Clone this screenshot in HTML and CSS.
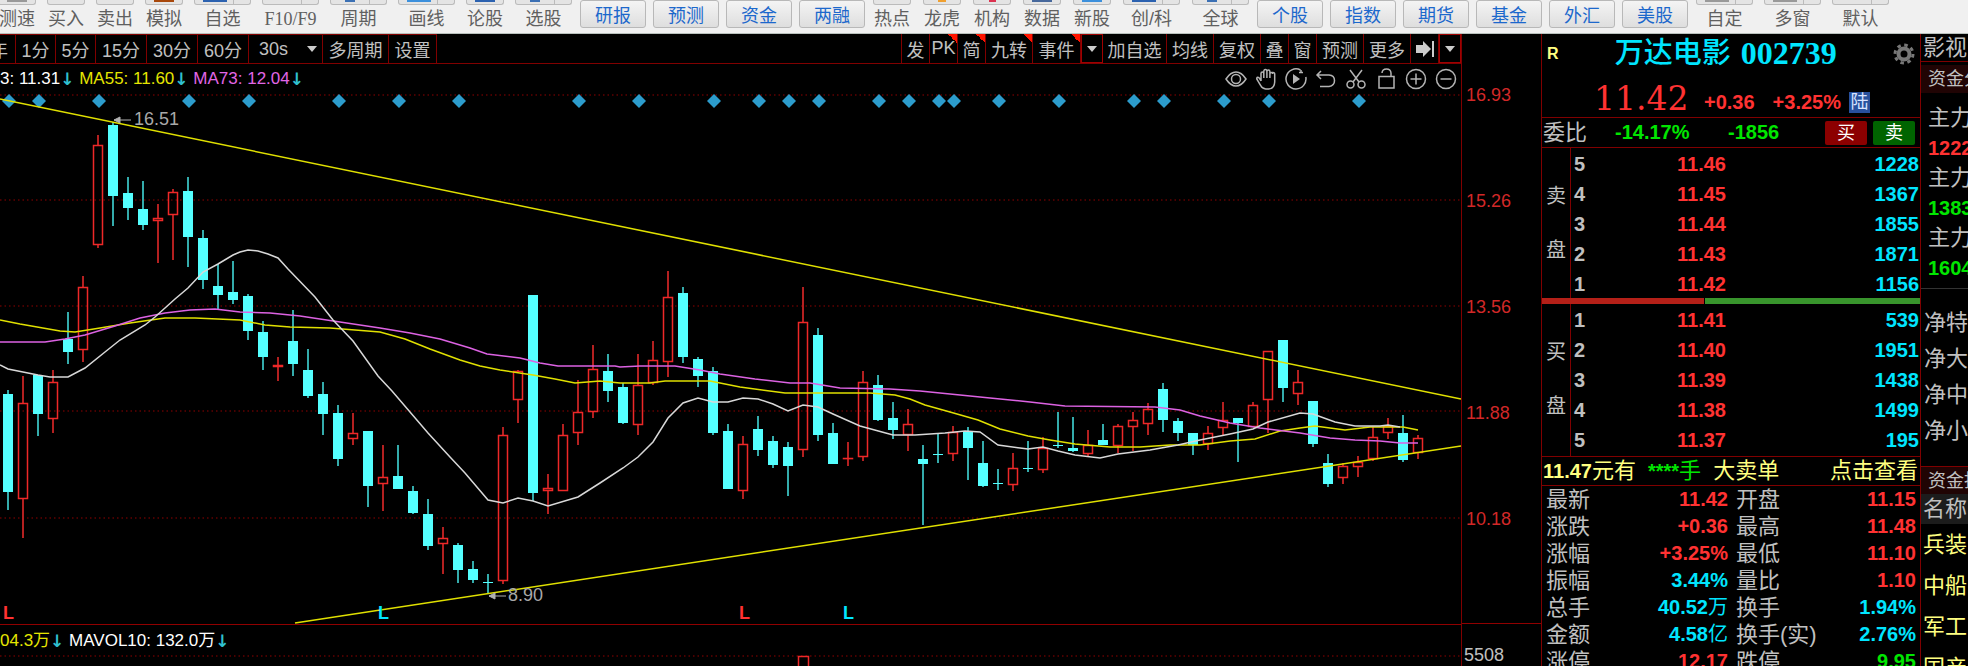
FILE: index.html
```
<!DOCTYPE html>
<html lang="zh-CN">
<head>
    <meta charset="UTF-8">
    <meta name="viewport" content="width=device-width, initial-scale=1.0">
    <title>万达电影 002739</title>
    <link rel="stylesheet" href="styles.css">
</head>
<body>
    <header class="toolbar">
        <div class="tool-group">
            <button class="tool"><i class="tool-icon gray"></i>测速</button>
            <button class="tool"><i class="tool-icon"></i>买入</button>
            <button class="tool"><i class="tool-icon"></i>卖出</button>
            <button class="tool"><i class="tool-icon brown"></i>模拟</button>
            <button class="tool wide"><i class="tool-icon split blue"></i>自选</button>
            <button class="tool wide latin"><i class="tool-icon split"></i>F10/F9</button>
            <button class="tool wide"><i class="tool-icon split dot"></i>周期</button>
            <button class="tool wide"><i class="tool-icon split sky"></i>画线</button>
            <button class="tool"><i class="tool-icon blue"></i>论股</button>
            <button class="tool wide"><i class="tool-icon split dot"></i>选股</button>
        </div>
        <div class="pill-group">
            <button class="pill">研报</button>
            <button class="pill">预测</button>
            <button class="pill">资金</button>
            <button class="pill">两融</button>
        </div>
        <div class="tool-group second">
            <button class="tool"><i class="tool-icon"></i>热点</button>
            <button class="tool"><i class="tool-icon orange"></i>龙虎</button>
            <button class="tool"><i class="tool-icon red"></i>机构</button>
            <button class="tool"><i class="tool-icon navy"></i>数据</button>
            <button class="tool"><i class="tool-icon sky"></i>新股</button>
            <button class="tool wide"><i class="tool-icon split blue"></i>创/科</button>
            <button class="tool wide"><i class="tool-icon split dot"></i>全球</button>
        </div>
        <div class="pill-group">
            <button class="pill">个股</button>
            <button class="pill">指数</button>
            <button class="pill">期货</button>
            <button class="pill">基金</button>
            <button class="pill">外汇</button>
            <button class="pill">美股</button>
        </div>
        <div class="tool-group">
            <button class="tool wide"><i class="tool-icon split gray"></i>自定</button>
            <button class="tool wide"><i class="tool-icon split gray"></i>多窗</button>
            <button class="tool wide"><i class="tool-icon split"></i>默认</button>
        </div>
    </header>

    <main class="terminal">
        <section class="chart">
            <nav class="tabs">
                <div class="tabs-left">
                    <button class="w-cut">年</button>
                    <button class="w-40">1分</button>
                    <button class="w-40">5分</button>
                    <button class="w-51">15分</button>
                    <button class="w-51">30分</button>
                    <button class="w-51">60分</button>
                    <label class="period">
                        <select aria-label="周期"><option>30s</option></select>
                    </label>
                    <button class="w-66">多周期</button>
                    <button class="w-48">设置</button>
                </div>
                <div class="tabs-right">
                    <button class="w-28">发</button>
                    <button class="w-28 hot">PK</button>
                    <button class="w-28 hot">简</button>
                    <button class="w-47 hot">九转</button>
                    <button class="w-48 hot">事件</button>
                    <button class="w-22 lit" aria-label="展开"><span class="caret"></span></button>
                    <button class="w-64">加自选</button>
                    <button class="w-47">均线</button>
                    <button class="w-47">复权</button>
                    <button class="w-28">叠</button>
                    <button class="w-28">窗</button>
                    <button class="w-47">预测</button>
                    <button class="w-47">更多</button>
                    <button class="w-28" aria-label="最右">
                        <svg width="20" height="18" viewBox="0 0 20 18" fill="#ccc"><path d="M1 5h7V1l8 8-8 8v-4H1z"/><path d="M17 1h2v16h-2z"/></svg>
                    </button>
                    <button class="w-22 lit" aria-label="更多选项"><span class="caret"></span></button>
                </div>
            </nav>

            <div class="info">
                <p class="averages">
                    <span class="white">3: 11.31</span><span class="down">↓</span>
                    <span class="yellow">MA55: 11.60</span><span class="down">↓</span>
                    <span class="pink">MA73: 12.04</span><span class="down">↓</span>
                </p>
                <div class="draw-tools">
                    <button aria-label="显示">
                        <svg viewBox="0 0 22 22"><path d="M1 11q4.500-7 10-7t10 7q-4.500 7-10 7t-10-7z"/><circle cx="11" cy="11" r="4.500"/></svg>
                    </button>
                    <button aria-label="拖动">
                        <svg viewBox="0 0 22 22"><path d="M6 13V5.500q0-1.500 1.400-1.500t1.400 1.500V10V3.500Q8.900 1.500 10.400 1.500t1.500 2V10V3.500Q12 2 13.400 2t1.500 1.500V10V6q0-1.500 1.400-1.500T17.700 6V4.500q2-.3 2 1.500v8q-.3 6.500-6 7h-3q-3.500-.2-5-3.500L2 11.500q-.7-2 .8-2.200 1.200 0 2 1.500L6 13"/></svg>
                    </button>
                    <button aria-label="回放">
                        <svg viewBox="0 0 22 22"><path d="M15.500 2A10 10 0 1 0 20.800 9"/><path d="M14 4.500h4M16 2v3"/><path class="solid" d="M8 6v10l7-5z"/></svg>
                    </button>
                    <button aria-label="撤销">
                        <svg viewBox="0 0 22 22"><path d="M6 3L2 7l4 4M2 7h12q5.500.3 5.500 5.500T14 18.500H5"/></svg>
                    </button>
                    <button aria-label="剪切">
                        <svg viewBox="0 0 22 22"><path d="M5 2l9 12M17 2L8 14"/><circle cx="5.500" cy="16.500" r="3.500"/><circle cx="16.500" cy="16.500" r="3.500"/></svg>
                    </button>
                    <button aria-label="锁定">
                        <svg viewBox="0 0 22 22"><path d="M4 8.500h15v11.500H4zM7 5q.3-4 4.500-4T16 5v3.500"/></svg>
                    </button>
                    <button aria-label="放大">
                        <svg viewBox="0 0 22 22"><circle cx="11" cy="11" r="9.500"/><path d="M5.500 11h11M11 5.500v11"/></svg>
                    </button>
                    <button aria-label="缩小">
                        <svg viewBox="0 0 22 22"><circle cx="11" cy="11" r="9.500"/><path d="M5.500 11h11"/></svg>
                    </button>
                </div>
            </div>

            <svg class="candles" id="candles" viewBox="0 92 1461 532" preserveAspectRatio="xMinYMin slice"></svg>

            <div class="volume">
                <p class="averages">
                    <span class="yellow">04.3万</span><span class="down">↓</span>
                    <span class="white">MAVOL10: 132.0万</span><span class="down">↓</span>
                </p>
                <svg class="volume-bars" viewBox="0 655 1461 11" preserveAspectRatio="xMinYMin slice">
                    <path class="grid" d="M0 656H1461"/>
                    <path class="up" d="M798.500 670V656.500H808.500V670"/>
                </svg>
            </div>
        </section>

        <aside class="axis">
            <ul class="prices">
                <li>16.93</li>
                <li>15.26</li>
                <li>13.56</li>
                <li>11.88</li>
                <li>10.18</li>
            </ul>
            <p class="volume-scale">5508</p>
        </aside>

        <section class="quote">
            <div class="stock">
                <div class="stock-name">
                    <span class="margin-flag">R</span>
                    <h1>万达电影 <b>002739</b></h1>
                    <button class="gear" aria-label="设置">
                        <svg width="22" height="22" viewBox="0 0 22 22" fill="none" stroke="#777"><circle cx="11" cy="11" r="5.500" stroke-width="4"/><circle cx="11" cy="11" r="9" stroke-width="3" stroke-dasharray="3.530 3.530"/></svg>
                    </button>
                </div>
                <div class="stock-price">
                    <strong>11.42</strong>
                    <span>+0.36</span>
                    <span>+3.25%</span>
                    <em>陆</em>
                </div>
            </div>

            <div class="ratio">
                <span class="label">委比</span>
                <span class="num">-14.17%</span>
                <span class="num">-1856</span>
                <button class="buy">买</button>
                <button class="sell">卖</button>
            </div>

            <div class="book asks">
                <div class="side"><span>卖</span><span>盘</span></div>
                <table>
                    <tr><th>5</th><td>11.46</td><td>1228</td></tr>
                    <tr><th>4</th><td>11.45</td><td>1367</td></tr>
                    <tr><th>3</th><td>11.44</td><td>1855</td></tr>
                    <tr><th>2</th><td>11.43</td><td>1871</td></tr>
                    <tr><th>1</th><td>11.42</td><td>1156</td></tr>
                </table>
            </div>
            <div class="balance"><span class="balance-buy"></span><span class="balance-sell"></span></div>
            <div class="book bids">
                <div class="side"><span>买</span><span>盘</span></div>
                <table>
                    <tr><th>1</th><td>11.41</td><td>539</td></tr>
                    <tr><th>2</th><td>11.40</td><td>1951</td></tr>
                    <tr><th>3</th><td>11.39</td><td>1438</td></tr>
                    <tr><th>4</th><td>11.38</td><td>1499</td></tr>
                    <tr><th>5</th><td>11.37</td><td>195</td></tr>
                </table>
            </div>

            <div class="notice">
                <span><b>11.47</b>元有</span>
                <span class="green"><b>****</b>手</span>
                <span>大卖单</span>
                <a href="#">点击查看</a>
            </div>

            <table class="stats">
                <tr><th>最新</th><td class="red">11.42</td><th>开盘</th><td class="red">11.15</td></tr>
                <tr><th>涨跌</th><td class="red">+0.36</td><th>最高</th><td class="red">11.48</td></tr>
                <tr><th>涨幅</th><td class="red">+3.25%</td><th>最低</th><td class="red">11.10</td></tr>
                <tr><th>振幅</th><td class="cyan">3.44%</td><th>量比</th><td class="red">1.10</td></tr>
                <tr><th>总手</th><td class="cyan">40.52<i>万</i></td><th>换手</th><td class="cyan">1.94%</td></tr>
                <tr><th>金额</th><td class="cyan">4.58<i>亿</i></td><th>换手(实)</th><td class="cyan">2.76%</td></tr>
                <tr><th>涨停</th><td class="red">12.17</td><th>跌停</th><td class="green">9.95</td></tr>
            </table>
        </section>

        <aside class="flow">
            <h2>影视</h2>
            <h3>资金分</h3>
            <dl>
                <dt>主力</dt><dd class="red">1222</dd>
                <dt>主力</dt><dd class="green">1383</dd>
                <dt>主力</dt><dd class="green">1604</dd>
            </dl>
            <ul class="net">
                <li>净特</li>
                <li>净大</li>
                <li>净中</li>
                <li>净小</li>
            </ul>
            <h3 class="ranking">资金抢</h3>
            <p class="column-name">名称</p>
            <ul class="sectors">
                <li>兵装</li>
                <li>中船</li>
                <li>军工</li>
                <li>国产</li>
            </ul>
        </aside>
    </main>

    <script src="chart.js"></script>
</body>
</html>
```
FILE: styles.css
```
* {
    box-sizing: border-box;
}

body {
    margin: 0;
    height: 100vh;
    display: flex;
    flex-direction: column;
    overflow: hidden;
    background: #000;
    color: #c0c0c0;
    font-family: "Liberation Sans", "Noto Sans CJK SC", sans-serif;
    font-size: 18px;
}

button, select {
    font: inherit;
    color: inherit;
    background: none;
    border: 0;
    border-radius: 0;
    padding: 0;
    cursor: pointer;
    white-space: nowrap;
}

h1, h2, h3, p, ul, dl, dd {
    margin: 0;
    padding: 0;
    font-weight: 400;
    list-style: none;
}

th {
    font-weight: 400;
    text-align: left;
}

table {
    border-collapse: collapse;
}

td, th {
    padding: 0;
}

.red { color: #ff3232; }
.green { color: #00e600; }
.cyan { color: #00e5ff; }
.white { color: #fff; }
.yellow { color: #e6e600; }
.pink { color: #e066e6; }

/* toolbar */
.toolbar {
    flex: 0 0 34px;
    display: flex;
    gap: 8px;
    background: #f0f0f0;
    border-bottom: 1px solid #b8c0bc;
    color: #606060;
    white-space: nowrap;
}

.tool-group {
    display: flex;
    gap: 11px;
}

.tool-group:first-child {
    margin-left: -2px;
}

.tool-group.second {
    gap: 12px;
}

.tool {
    width: 38px;
    display: flex;
    flex-direction: column;
    align-items: center;
    line-height: 28px;
}

.tool.wide {
    width: 57px;
}

.tool.latin {
    font-family: "Liberation Serif", serif;
}

.tool-icon {
    flex: 0 0 5px;
    width: 100%;
    border: 1px solid #bbb;
    border-top: 0;
    border-radius: 0 0 3px 3px;
    background: linear-gradient(currentColor, currentColor) center top / 20px 2px no-repeat #e4e4e4;
    color: transparent;
}

.tool-icon.split {
    background: linear-gradient(currentColor, currentColor) 8px 0 / 24px 2px no-repeat,
        linear-gradient(#bbb, #bbb) 38px 0 / 1px 5px no-repeat #e4e4e4;
}

.tool-icon.gray { color: #999; }
.tool-icon.brown { color: #a8480c; }
.tool-icon.blue { color: #2c62b0; }
.tool-icon.sky { color: #3c90dc; }
.tool-icon.navy { color: #47689c; }
.tool-icon.orange { color: #f0a030; background-size: 8px 2px; }
.tool-icon.red { color: #dc3250; background-size: 7px 2px; }
.tool-icon.dot { color: #3c70b4; background-size: 10px 2px, 1px 5px; background-position: 14px 0, 38px 0; }

.pill-group {
    display: flex;
    gap: 7px;
}

.pill {
    width: 66px;
    height: 28px;
    padding-top: 2px;
    border: 1px solid #b8b8b8;
    border-radius: 3px;
    background: linear-gradient(#f4f4f4, #dedede);
    color: #1c68cc;
    line-height: 26px;
}

/* columns */
.terminal {
    flex: 1;
    min-height: 0;
    display: grid;
    grid-template-columns: 1fr 80px 380px 47px;
    grid-template-rows: 100%;
}

.chart {
    display: flex;
    flex-direction: column;
    min-width: 0;
    overflow: hidden;
}

.tabs {
    flex: 0 0 30px;
    display: flex;
    justify-content: space-between;
    border-bottom: 1px solid #800000;
}

.tabs-left, .tabs-right {
    display: flex;
}

.tabs button, .period {
    display: flex;
    align-items: center;
    justify-content: center;
    border-right: 1px solid #800000;
}

.tabs-left {
    border-top: 1px solid #800000;
}

.tabs-right {
    border-left: 1px solid #800000;
}

.w-cut { width: 16px; }
.w-22 { width: 22px; }
.w-28 { width: 28px; }
.w-40 { width: 40px; }
.w-47 { width: 47px; }
.w-48 { width: 48px; }
.w-51 { width: 51px; }
.w-64 { width: 64px; }
.w-66 { width: 66px; }

.tabs-left .w-cut {
    justify-content: flex-end;
    padding-right: 7px;
}

.tabs-right .lit {
    border: 1px solid #a00000;
}

.hot {
    background: linear-gradient(45deg, transparent 50%, #ff1400 50%) right top / 9px 9px no-repeat;
}

.period {
    width: 74px;
    justify-content: space-between;
    padding: 0 5px 0 10px;
}

.period select {
    appearance: none;
    width: 34px;
}

.period::after, .caret {
    content: "";
    border: 5px solid transparent;
    border-top: 6px solid #ccc;
    border-bottom: 0;
}

.info {
    flex: 0 0 28px;
    display: flex;
    justify-content: space-between;
    align-items: center;
    padding-top: 2px;
}

.averages {
    display: flex;
    font-size: 17px;
    line-height: 26px;
    white-space: nowrap;
}

.down {
    width: 19px;
    color: #30c0d0;
    font-family: "DejaVu Sans", sans-serif;
    font-weight: bold;
}

.draw-tools {
    display: flex;
    gap: 8px;
    padding-right: 4px;
}

.draw-tools button {
    width: 22px;
    height: 22px;
}

.draw-tools svg {
    display: block;
    fill: none;
    stroke: #b4b4b4;
    stroke-width: 1.5;
}

.draw-tools .solid {
    fill: #b4b4b4;
    stroke: none;
}

.candles {
    flex: 1;
    min-height: 0;
    width: 100%;
}

.candles text {
    font-size: 18px;
    fill: #a8a8a8;
}

.candles .mark {
    font-weight: bold;
    stroke: none;
}

.candles .mark-red { fill: #ff3232; }
.candles .mark-cyan { fill: #00e5ff; }

.grid {
    stroke: #900000;
    stroke-dasharray: 1.5 3;
}

.up {
    fill: none;
    stroke: #ee2828;
    stroke-width: 1.5;
}

.up-wick {
    stroke: #b42020;
    stroke-width: 2;
}

.fall {
    fill: #54ffff;
}

.fall-wick {
    stroke: #34acac;
    stroke-width: 2;
}

.event {
    fill: #2c9ccc;
}

.line {
    fill: none;
    stroke-width: 1.5;
}

.line-white { stroke: #d8d8d8; }
.line-yellow { stroke: #e0e000; }
.line-pink { stroke: #dc62e2; }

.pointer {
    fill: #b0b0b0;
    stroke: #b0b0b0;
}

.volume {
    flex: 0 0 42px;
    display: flex;
    flex-direction: column;
    justify-content: space-between;
    padding-top: 3px;
    border-top: 1px solid #900000;
}

.volume-bars {
    width: 100%;
    height: 11px;
}

/* price axis */
.axis {
    display: flex;
    flex-direction: column;
    border-left: 1px solid #800000;
    line-height: 22px;
}

.prices {
    flex: 1;
    padding: 50px 0 0 4px;
    color: #d22828;
}

.prices li {
    height: 106px;
}

.volume-scale {
    flex: 0 0 42px;
    border-top: 1px solid #900000;
    padding: 20px 0 0 2px;
}

/* quote */
.quote {
    border: 1px solid #800000;
    border-width: 0 1px;
    overflow: hidden;
    font-size: 22px;
}

.stock {
    height: 83px;
}

.stock-name {
    display: flex;
    align-items: center;
    justify-content: space-between;
    height: 39px;
    padding: 0 5px;
}

.margin-flag {
    color: #ffff80;
    font-size: 16px;
    font-weight: bold;
}

.stock-name h1 {
    display: flex;
    align-items: center;
    gap: 10px;
    color: #00e5ff;
    font-size: 29px;
    font-weight: 500;
    line-height: 39px;
}

.stock-name b {
    font-family: "Liberation Serif", serif;
    font-size: 32px;
    font-weight: bold;
}

.gear svg {
    display: block;
}

.stock-price {
    display: flex;
    align-items: flex-end;
    height: 44px;
    padding-left: 52px;
    color: #ff3232;
    font-size: 20px;
    font-weight: bold;
    line-height: 30px;
}

.stock-price strong {
    width: 110px;
    font-family: "DejaVu Serif", serif;
    font-size: 33px;
    font-weight: 400;
    line-height: 36px;
}

.stock-price span {
    margin-right: 18px;
}

.stock-price span:nth-of-type(2) {
    margin-right: 8px;
}

.stock-price em {
    width: 21px;
    height: 21px;
    margin-bottom: 4px;
    background: #28509c;
    color: #d8e4ff;
    font-size: 18px;
    font-style: normal;
    font-weight: 400;
    line-height: 20px;
    text-align: center;
}

.ratio {
    display: grid;
    grid-template-columns: 72px 113px 97px 42px 48px;
    align-items: center;
    height: 31px;
    padding-left: 1px;
    border: 1px solid #800000;
    border-width: 1px 0;
}

.ratio .label {
    line-height: 28px;
}

.ratio .num {
    color: #00e600;
    font-size: 20px;
    font-weight: bold;
}

.ratio button {
    width: 42px;
    height: 24px;
    border-radius: 2px;
    color: #fff;
    font-size: 18px;
    line-height: 22px;
}

.ratio .buy { background: #8c0000; }
.ratio .sell { background: #006400; margin-left: 6px; }

.book {
    display: flex;
    line-height: 30px;
}

.asks {
    height: 150px;
}

.bids {
    height: 152px;
}

.side {
    flex: 0 0 29px;
    display: flex;
    flex-direction: column;
    align-items: center;
    gap: 24px;
    padding-top: 33px;
    border-right: 1px solid #800000;
    font-size: 20px;
}

.book table {
    flex: 1;
    height: 150px;
    margin-top: 1px;
    font-size: 20px;
    font-weight: bold;
}

.book th {
    width: 106px;
    padding-left: 3px;
    font-weight: bold;
}

.book td {
    color: #ff3232;
}

.book td:last-child {
    color: #00e5ff;
    text-align: right;
    padding-right: 1px;
}

.balance {
    display: flex;
    gap: 1px;
    height: 6px;
}

.balance-buy {
    flex: 43;
    background: #b42018;
}

.balance-sell {
    flex: 57;
    background: #38942c;
}

.notice {
    display: flex;
    gap: 12px;
    height: 30px;
    padding: 0 2px 0 1px;
    border: 1px solid #800000;
    border-width: 1px 0;
    color: #ffff80;
    line-height: 27px;
    white-space: nowrap;
}

.notice b {
    font-size: 20px;
    font-weight: bold;
}

.notice a {
    margin-left: auto;
    color: inherit;
    text-decoration: none;
}

.stats {
    width: 100%;
    table-layout: fixed;
    line-height: 27px;
}

.stats th:first-child {
    width: 60px;
    padding-left: 4px;
}

.stats td:nth-child(2) {
    width: 126px;
}

.stats th:nth-child(3) {
    width: 100px;
    padding-left: 8px;
    white-space: nowrap;
}

.stats td {
    font-size: 20px;
    font-weight: bold;
    text-align: right;
}

.stats td:last-child {
    padding-right: 4px;
}

.stats td i {
    font-style: normal;
    font-weight: 400;
}

/* money flow */
.flow {
    overflow: hidden;
    font-size: 22px;
    white-space: nowrap;
}

.flow h2 {
    height: 28px;
    padding-left: 2px;
    border-bottom: 1px solid #800000;
    font-size: 22px;
    line-height: 27px;
}

.flow h3 {
    height: 28px;
    margin-top: 3px;
    padding-left: 7px;
    background: #200404;
    font-size: 18px;
    line-height: 28px;
}

.flow dl {
    height: 196px;
    padding: 10px 0 0 7px;
    border-bottom: 1px solid #333;
    line-height: 30px;
}

.flow dd {
    font-size: 20px;
    font-weight: bold;
}

.net {
    padding: 16px 0 17px 3px;
    line-height: 36px;
}

.flow .ranking {
    margin-top: 0;
    border-top: 1px solid #800000;
}

.column-name {
    padding-left: 2px;
    background: #1c1c1c;
    line-height: 30px;
}

.sectors {
    padding-left: 2px;
    color: #ffff80;
    line-height: 41px;
}
```
FILE: chart.js
```
const NS = 'http://www.w3.org/2000/svg';
const chart = document.getElementById('candles');

const STEP = 15;
const LEFT = 8;
const BODY = 10;

// direction, high, body top, body bottom, low
const candles = [
    ['d', 390, 394, 492, 510], ['u', 376, 403, 499, 538], ['d', 375, 375, 414, 436],
    ['u', 370, 382, 419, 433], ['d', 312, 339, 352, 364], ['u', 276, 287, 350, 362],
    ['u', 135, 145, 245, 248], ['d', 122, 125, 196, 226], ['d', 177, 193, 208, 220],
    ['d', 181, 209, 225, 230], ['u', 204, 218, 221, 263], ['u', 189, 192, 215, 260],
    ['d', 177, 191, 237, 267], ['d', 230, 238, 280, 289], ['d', 264, 286, 295, 309],
    ['d', 261, 292, 300, 304], ['d', 294, 296, 331, 340], ['d', 321, 332, 357, 370],
    ['u', 357, 365, 367, 381], ['d', 310, 341, 364, 376], ['d', 349, 370, 396, 398],
    ['d', 382, 394, 414, 435], ['d', 405, 413, 459, 466], ['u', 413, 433, 439, 445],
    ['d', 431, 431, 486, 507], ['u', 445, 477, 484, 511], ['d', 445, 476, 489, 489],
    ['d', 486, 491, 513, 514], ['d', 499, 514, 546, 550], ['u', 527, 538, 544, 574],
    ['d', 543, 545, 570, 583], ['d', 561, 569, 580, 583], ['d', 574, 582, 583, 594],
    ['u', 427, 435, 581, 584], ['u', 370, 371, 400, 423], ['d', 295, 295, 493, 501],
    ['u', 474, 488, 491, 514], ['u', 424, 435, 491, 491], ['u', 380, 412, 433, 445],
    ['u', 345, 369, 412, 418], ['d', 354, 371, 391, 402], ['d', 383, 387, 423, 424],
    ['u', 354, 385, 425, 435], ['u', 341, 360, 383, 385], ['u', 271, 297, 362, 377],
    ['d', 287, 293, 357, 363], ['d', 357, 359, 376, 387], ['d', 367, 371, 433, 435],
    ['d', 424, 431, 489, 489], ['u', 436, 444, 491, 499], ['d', 416, 429, 450, 456],
    ['d', 436, 441, 465, 468], ['d', 442, 447, 466, 496], ['u', 287, 322, 450, 457],
    ['d', 328, 335, 435, 441], ['d', 423, 433, 464, 464], ['u', 442, 458, 458, 466],
    ['u', 371, 382, 457, 461], ['d', 375, 385, 420, 421], ['d', 402, 418, 430, 439],
    ['u', 409, 424, 435, 451], ['d', 445, 459, 464, 525], ['d', 433, 454, 455, 463],
    ['u', 426, 432, 454, 461], ['d', 427, 431, 448, 480], ['d', 441, 463, 486, 487],
    ['d', 469, 483, 484, 490], ['u', 453, 468, 485, 491], ['d', 441, 468, 469, 472],
    ['u', 437, 448, 470, 473], ['d', 412, 445, 446, 448], ['d', 417, 448, 451, 452],
    ['u', 430, 445, 454, 456], ['d', 424, 440, 445, 445], ['u', 424, 426, 446, 453],
    ['u', 412, 420, 427, 451], ['u', 403, 409, 424, 435], ['d', 383, 389, 420, 432],
    ['d', 418, 421, 433, 441], ['d', 433, 433, 445, 455], ['u', 426, 433, 444, 450],
    ['u', 402, 420, 428, 435], ['d', 418, 418, 423, 462], ['u', 402, 405, 427, 427],
    ['u', 351, 351, 400, 433], ['d', 340, 340, 388, 402], ['u', 370, 382, 394, 405],
    ['d', 401, 401, 444, 447], ['d', 454, 463, 484, 487], ['u', 463, 466, 478, 484],
    ['u', 456, 462, 467, 477], ['u', 427, 437, 459, 461], ['u', 418, 426, 433, 439],
    ['d', 415, 433, 460, 462], ['u', 435, 438, 453, 459]
];

// candle numbers that carry an event marker
const events = [0, 2, 6, 12, 16, 22, 26, 30, 38, 42, 47, 50, 52, 54, 58, 60, 62, 63, 66, 70, 75, 77, 81, 84, 90];

const lines = {
    yellow: '0,320 20,324 60,331 75,332 100,328 130,323 165,318 195,318 240,320 265,325 290,327 330,328 380,332 405,339 430,349 460,360 480,366 500,370 533,375 555,379 575,383 600,381 620,383 650,383 665,381 710,381 740,387 785,393 870,393 895,395 910,399 925,405 950,412 978,420 1000,429 1028,436 1050,440 1075,444 1110,447 1140,447 1170,445 1200,445 1230,441 1255,439 1280,431 1300,428 1315,426 1345,430 1370,427 1403,427 1418,430',
    pink: '0,342 45,342 65,339 85,335 115,326 140,318 165,313 190,310 215,309 240,312 270,313 300,316 340,322 380,328 410,333 440,339 470,348 487,354 520,358 540,363 558,366 615,366 620,367 640,366 675,366 700,370 720,374 755,379 790,383 810,383 840,388 890,389 920,391 960,395 990,398 1030,402 1065,406 1155,407 1180,410 1200,416 1230,423 1260,428 1300,433 1330,438 1355,440 1380,441 1400,443 1418,443',
    white: '0,365 8,369 38,375 50,377 68,377 85,368 105,352 120,340 145,325 155,317 175,299 188,288 203,272 218,264 233,255 240,252 248,250 258,251 268,254 278,258 288,269 315,297 333,320 353,341 378,376 392,391 428,433 450,457 465,473 488,500 503,503 518,498 533,501 548,506 578,497 600,483 623,468 638,457 653,442 668,418 683,403 698,398 713,402 728,402 743,398 758,399 773,404 788,411 803,405 818,407 833,414 860,426 893,435 915,435 945,433 965,431 980,432 998,445 1028,449 1043,447 1058,451 1075,455 1100,458 1118,454 1150,450 1178,445 1200,440 1230,434 1253,429 1268,422 1300,413 1313,414 1335,422 1355,426 1380,426 1388,425 1400,427'
};

const trends = ['0,99 1461,399', '295,623 1461,446'];

function add(tag, attrs, text) {
    const el = document.createElementNS(NS, tag);
    for (const key in attrs) {
        el.setAttribute(key, attrs[key]);
    }
    if (text) {
        el.textContent = text;
    }
    chart.appendChild(el);
}

[95, 200, 306, 411, 518].forEach(y => {
    add('path', { class: 'grid', d: `M0 ${y}H1461` });
});

events.forEach(n => {
    const x = LEFT + 1 + n * STEP;
    add('path', { class: 'event', d: `M${x} 94l7 7-7 7-7-7z` });
});

candles.forEach(([dir, high, top, bottom, low], i) => {
    const x = LEFT + i * STEP;
    if (dir === 'd') {
        add('path', { class: 'fall-wick', d: `M${x} ${high}V${low}` });
        add('rect', { class: 'fall', x: x - BODY / 2, y: top, width: BODY, height: bottom - top });
    } else {
        add('path', { class: 'up-wick', d: `M${x} ${high}V${top}M${x} ${bottom}V${low}` });
        add('rect', { class: 'up', x: x - BODY / 2 + 0.5, y: top + 0.5, width: BODY - 1, height: Math.max(bottom - top - 1, 0.1) });
    }
});

for (const name in lines) {
    add('polyline', { class: `line line-${name}`, points: lines[name] });
}

trends.forEach(points => {
    add('polyline', { class: 'line line-yellow', points });
});

// highest and lowest price
add('path', { class: 'pointer', d: 'M131 120H114l6-3v6l-6-3' });
add('text', { x: 134, y: 125 }, '16.51');
add('path', { class: 'pointer', d: 'M506 596H489l6-3v6l-6-3' });
add('text', { x: 508, y: 601 }, '8.90');

add('text', { class: 'mark mark-red', x: 3, y: 619 }, 'L');
add('text', { class: 'mark mark-cyan', x: 378, y: 619 }, 'L');
add('text', { class: 'mark mark-red', x: 739, y: 619 }, 'L');
add('text', { class: 'mark mark-cyan', x: 843, y: 619 }, 'L');
```
